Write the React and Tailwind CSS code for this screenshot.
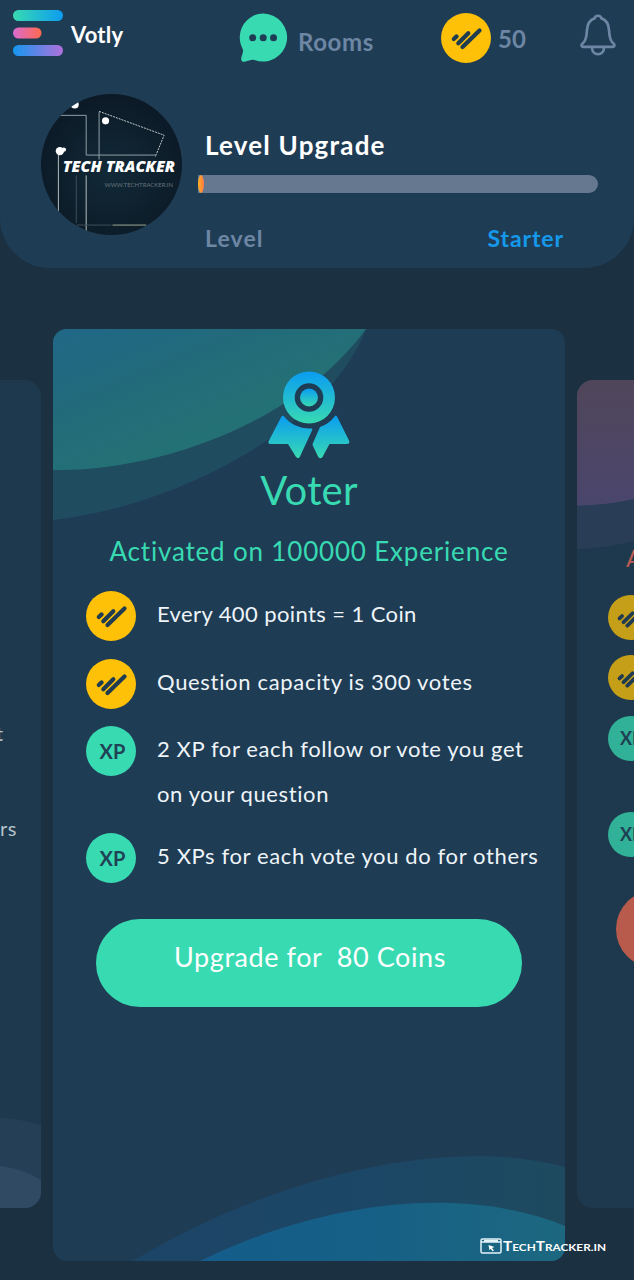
import React from "react";

const FONT = "font-['Lato','Liberation_Sans',sans-serif]";

function Coin({ className = "size-[50px]" }) {
  return (
    <svg viewBox="0 0 50 50" className={`shrink-0 ${className}`}>
      <circle cx="25" cy="25" r="25" fill="#ffc107" />
      <g stroke="#1f3c50" strokeWidth="4.200" strokeLinecap="round">
        <path d="M12.800 26l2.800-2.600" />
        <path d="M17.300 30.200L27.300 20.300" />
        <path d="M21.500 34L38.500 17.500" />
      </g>
    </svg>
  );
}

function Xp({ className = "size-[50px] text-[20px] pl-[3px]" }) {
  return (
    <div className={`flex shrink-0 items-center justify-center rounded-full bg-[#38dab2] font-bold text-[#1f4355] ${className}`}>
      XP
    </div>
  );
}

function Logo() {
  return (
    <svg viewBox="0 0 50 46" className="h-[46px] w-[50px]">
      <defs>
        <linearGradient id="la"><stop offset="0" stopColor="#38dab2" /><stop offset="1" stopColor="#0d9cf0" /></linearGradient>
        <linearGradient id="lb"><stop offset="0" stopColor="#d96bd0" /><stop offset="1" stopColor="#ff6a4d" /></linearGradient>
        <linearGradient id="lc"><stop offset="0" stopColor="#1598f0" /><stop offset="1" stopColor="#b070dc" /></linearGradient>
      </defs>
      <rect width="50" height="11" rx="5.500" fill="url(#la)" />
      <rect y="17.500" width="28.500" height="11" rx="5.500" fill="url(#lb)" />
      <rect y="35" width="50" height="11" rx="5.500" fill="url(#lc)" />
    </svg>
  );
}

function Chat() {
  return (
    <svg viewBox="0 0 49 50" className="h-[50px] w-[49px]">
      <path d="M24.500 0.500a24 24 0 1 1-9 46.400c-3-.8-6 .8-9.500 1.800-2.500.6-4-.9-3.800-3.200.3-3.500 2.800-6.500 1.500-9.500A24 24 0 0 1 24.500.5z" fill="#38dab2" />
      <g fill="#1f3c55"><circle cx="13.700" cy="24.800" r="3.500" /><circle cx="24.200" cy="24.800" r="3.500" /><circle cx="34.500" cy="24.800" r="3.500" /></g>
    </svg>
  );
}

function Bell() {
  return (
    <svg viewBox="0 0 36 42" className="h-[42px] w-[36px]" fill="none" stroke="#6d86a3" strokeWidth="2.700" strokeLinejoin="round">
      <path d="M14.700 4.300C15.200 .9 20.800 .9 21.300 4.300c5.200 1.800 7.400 6 7.700 11.700.3 7.500 1.200 10.800 4.200 13.300 2.200 2 1.200 3.500-.7 3.500h-29c-1.900 0-2.900-1.500-.7-3.500 3-2.500 3.900-5.800 4.200-13.300.3-5.700 2.500-9.900 7.700-11.700z" />
      <path d="M12 33.500c0 9 12 9 12 0" />
    </svg>
  );
}

function Avatar() {
  return (
    <svg viewBox="0 0 142 142" className="size-[141px] shrink-0">
      <defs>
        <radialGradient id="av" cx=".5" cy=".55" r=".6"><stop offset="0" stopColor="#122a38" /><stop offset="1" stopColor="#0b1824" /></radialGradient>
        <clipPath id="ac"><circle cx="71" cy="71" r="71" /></clipPath>
      </defs>
      <g clipPath="url(#ac)">
        <rect width="142" height="142" fill="url(#av)" />
        <g fill="none" stroke="#8fa0a5" strokeWidth="1">
          <path d="M18 21.500h27.500v40h70" />
          <path d="M58.500 66V18" />
          <path d="M17.500 59v65M45.500 82v60" stroke="#b5c0c0" />
          <path d="M35.500 82v48" stroke="#3d505a" />
          <path d="M36 132h35" stroke="#3d505a" />
          <path d="M72 132h34" stroke="#9da994" />
          <path d="M58.500 17.500l65.500 24-9 22" strokeDasharray="2 1" stroke="#c5cdd0" />
        </g>
        <g fill="#fff"><circle cx="65" cy="27" r="3.600" /><circle cx="19" cy="57.500" r="4.200" /><circle cx="23" cy="56" r="2.200" /><circle cx="34" cy="10.500" r="4" /></g>
        <text x="22" y="79" fill="#fff" fontFamily="Open Sans, sans-serif" fontWeight="800" fontStyle="italic" fontSize="16.500" textLength="113" lengthAdjust="spacingAndGlyphs">TECH TRACKER</text>
        <text x="64" y="94" fill="#65747c" fontFamily="Lato, sans-serif" fontSize="6" textLength="69">WWW.TECHTRACKER.IN</text>
      </g>
    </svg>
  );
}

function Medal() {
  return (
    <svg viewBox="0 0 82 88" className="h-[88px] w-[82px]">
      <defs>
        <linearGradient id="ma" x1="0" y1="0" x2="0" y2="1"><stop offset="0" stopColor="#0a9cf2" /><stop offset="1" stopColor="#38dab2" /></linearGradient>
      </defs>
      <circle cx="41" cy="26.500" r="15" fill="#1f3c55" />
      <path fillRule="evenodd" fill="url(#ma)" d="M41 .5a26 26 0 1 1 0 52 26 26 0 0 1 0-52zM41 12.200a14.300 14.300 0 1 0 0 28.600 14.300 14.300 0 0 0 0-28.600z" />
      <circle cx="41" cy="26.500" r="9" fill="url(#ma)" />
      <path fill="url(#ma)" d="M13.500 45.500q1.500-1.500 2.500 0C22 53 32 58 43.500 57.500q1.300 0 .6 1.700L32 85.500q-1.500 3-4 .5L20 73H3q-4 0-2-3.500z" />
      <path fill="url(#ma)" d="M67 45q1-1 2 .5L81 69.500q1.500 3.500-2 3.500H61.500L54.500 86q-2 2.500-4.200 0L45 75q-.8-1.500 0-3L52 56q9-3 15-11z" />
    </svg>
  );
}

function Benefit({ icon, children, className = "" }) {
  return (
    <li className={`flex gap-[21px] ${className}`}>
      {icon}
      <p className="whitespace-nowrap text-[22px] leading-[45px] text-[#eef4f8]">{children}</p>
    </li>
  );
}

function Header() {
  return (
    <header className="h-[268px] rounded-b-[50px] bg-[#1f3c55]">
      <nav className="flex h-[94px] items-start pl-[13px] pr-[18px] pt-[10px]">
        <Logo />
        <span className="ml-[8px] mt-[9px] w-[168px] text-[22px] font-bold leading-8 tracking-[0.2px] text-white">Votly</span>
        <span className="mt-[3px]"><Chat /></span>
        <span className="ml-[10px] mt-[16px] w-[143px] text-[24px] font-bold leading-8 tracking-[0.6px] text-[#6d86a3]">Rooms</span>
        <span className="mt-[3px]"><Coin /></span>
        <span className="ml-[7px] mt-[13px] text-[24px] font-bold leading-8 text-[#6d86a3]">50</span>
        <span className="ml-auto mt-[4px]"><Bell /></span>
      </nav>
      <div className="flex pl-[41px]">
        <Avatar />
        <div className="ml-[16px] mt-[34px] w-[400px]">
          <h1 className="pl-[7px] text-[26px] font-bold leading-[34px] tracking-[1.2px] text-white">Level Upgrade</h1>
          <div className="mt-[13px] h-[18px] rounded-l-[6px] rounded-r-full bg-[#66788f]">
            <div className="h-full w-[6px] rounded-[50%] bg-linear-to-r from-[#ffb020] to-[#ff7840]" />
          </div>
          <div className="mt-[29px] flex justify-between pl-[7px] pr-[34px] text-[23px] font-bold leading-8">
            <span className="tracking-[1.1px] text-[#6d86a3]">Level</span>
            <span className="tracking-[0.9px] text-[#1598ea]">Starter</span>
          </div>
        </div>
      </div>
    </header>
  );
}

function PreviousCard() {
  return (
    <section className="relative mt-[51px] h-[828px] w-[41px] shrink-0 overflow-hidden rounded-r-[16px] bg-[#1e394d]">
      <svg viewBox="0 0 41 100" className="absolute bottom-0 left-0 h-[100px] w-[41px]">
        <path d="M0 10Q22 11 41 17V100H0z" fill="#243f56" />
        <path d="M0 58Q24 61 41 72V100H0z" fill="#304a64" />
      </svg>
      <div className="flex flex-col pt-[331px] text-[20px] leading-[44px] text-[#b5c2ca]">
        <span className="-ml-[4px]">t</span>
        <span className="mt-[51px] tracking-[0.5px]">rs</span>
      </div>
    </section>
  );
}

function NextCard() {
  return (
    <section className="relative mt-[51px] h-[828px] w-[57px] shrink-0 overflow-hidden rounded-l-[16px] bg-[#1e394d]">
      <svg viewBox="0 0 57 170" className="absolute left-0 top-0 h-[170px] w-[57px]">
        <defs><linearGradient id="nx" x1="0" y1="0" x2="0" y2="1"><stop offset="0" stopColor="#50465a" /><stop offset="1" stopColor="#4a456c" /></linearGradient></defs>
        <path d="M0 0H57V161Q30 168 0 169z" fill="#293d57" />
        <path d="M0 0H57V119Q30 125 0 125.500z" fill="url(#nx)" />
      </svg>
      <div className="relative flex w-[110px] flex-col pl-[31px] pt-[162px]">
        <span className="ml-[18px] text-[24px] leading-[32px] text-[#b95c50]">A</span>
        <Coin className="mt-[21px] size-[45px] opacity-75" />
        <Coin className="mt-[15px] size-[45px] opacity-75" />
        <Xp className="mt-[16px] size-[45px] pl-[2px] text-[18px] opacity-75" />
        <Xp className="mt-[51px] size-[45px] pl-[2px] text-[18px] opacity-75" />
      </div>
      <div className="relative ml-[39px] mt-[33px] h-[78px] w-[300px] rounded-full bg-[#b95b4c]" />
    </section>
  );
}

function VoterCard() {
  return (
    <section className="relative h-[932px] w-[512px] shrink-0 overflow-hidden rounded-[14px] bg-[#1f3c55]">
      <svg viewBox="0 0 512 932" className="absolute inset-0 h-full w-full">
        <defs>
          <linearGradient id="ta" gradientUnits="userSpaceOnUse" x1="0" y1="0" x2="60" y2="140"><stop offset="0" stopColor="#206887" /><stop offset=".5" stopColor="#226a7b" /><stop offset="1" stopColor="#247175" /></linearGradient>
          <linearGradient id="ba"><stop offset="0" stopColor="#145d8b" /><stop offset=".45" stopColor="#165f86" /><stop offset="1" stopColor="#1d6880" /></linearGradient>
          <linearGradient id="bb"><stop offset="0" stopColor="#1c4466" /><stop offset=".5" stopColor="#1c4666" /><stop offset="1" stopColor="#1e4a60" /></linearGradient>
        </defs>
        <path d="M0 0H313C275 100 120 178 0 191z" fill="#204c60" />
        <path d="M0 0H313C245 93 105 143 0 141z" fill="url(#ta)" />
        <path d="M80 932C210 852 390 805 512 838V932z" fill="url(#bb)" />
        <path d="M147 932C270 872 410 855 512 897V932z" fill="url(#ba)" />
      </svg>
      <div className="relative flex h-full flex-col items-center">
        <div className="mt-[42px]"><Medal /></div>
        <h2 className="mt-[7px] text-[40px] leading-[48px] tracking-[0.2px] text-[#38dab2]">Voter</h2>
        <p className="mt-[20px] whitespace-nowrap text-[26px] leading-[34px] tracking-[0.82px] text-[#38dab2]">Activated on 100000 Experience</p>
        <ul className="mt-[23px] w-full pl-[33px]">
          <Benefit icon={<Coin />}><span className="tracking-[0.4px]">Every 400 points = 1 Coin</span></Benefit>
          <Benefit className="mt-[18px]" icon={<Coin />}><span className="tracking-[0.68px]">Question capacity is 300 votes</span></Benefit>
          <Benefit className="mt-[17px]" icon={<Xp />}>
            <span className="tracking-[0.6px]">2 XP for each follow or vote you get</span><br />
            <span className="tracking-[0.6px]">on your question</span>
          </Benefit>
          <Benefit className="mt-[17px]" icon={<Xp />}><span className="tracking-[0.62px]">5 XPs for each vote you do for others</span></Benefit>
        </ul>
        <button className="mt-[36px] h-[88px] w-[426px] whitespace-pre rounded-full bg-[#38dab2] pb-[11px] pl-[2px] text-[27px] tracking-[0.57px] text-white">Upgrade for  80 Coins</button>
      </div>
    </section>
  );
}

function Watermark() {
  return (
    <div className="absolute left-[480px] top-[1236px] flex items-center gap-[1px] text-white">
      <svg viewBox="0 0 22 16" className="h-[16px] w-[22px]" fill="none" stroke="#e4f2f8" strokeWidth="1.500">
        <rect x="1" y="1" width="20" height="14" rx="1.500" />
        <path d="M1 4h20M4 2.500h14" />
        <path d="M8.500 7l6 2-2.500 1 2 2.500-1.500.8-1.700-2.500-1.300 1.500z" fill="#fff" stroke="none" />
      </svg>
      <span className="mt-[2px] origin-left scale-x-[1.18] whitespace-nowrap text-[13px] font-bold leading-4">T<span className="text-[10px]">ECH</span>T<span className="text-[10px]">RACKER.IN</span></span>
    </div>
  );
}

export default function App() {
  return (
    <div className={`relative h-[1280px] w-[634px] overflow-hidden bg-[#1b3040] ${FONT}`}>
      <Header />
      <main className="mt-[61px] flex items-start gap-[12px]">
        <PreviousCard />
        <VoterCard />
        <NextCard />
      </main>
      <Watermark />
    </div>
  );
}
